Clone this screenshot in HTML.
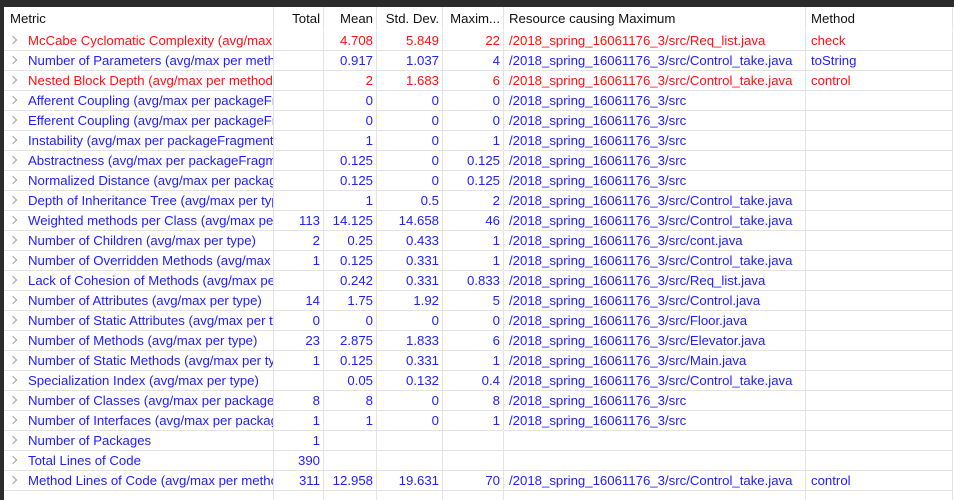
<!DOCTYPE html><html><head><style>
body{margin:0;width:954px;height:500px;overflow:hidden;background:#fff;font-family:"Liberation Sans","Noto Sans CJK SC",sans-serif;font-size:13.2px;position:relative}
.top{position:absolute;left:0;top:0;width:954px;height:7px;background:#2b2b2b}
.lft{position:absolute;left:0;top:0;width:4px;height:500px;background:#2b2b2b}
.r{position:absolute;left:4px;width:949px;height:20px;border-bottom:1px solid #e3e3e3;box-sizing:border-box}
.c{position:absolute;top:0;height:20px;line-height:20px;white-space:nowrap;overflow:hidden;border-right:1px solid #e3e3e3;box-sizing:border-box}
.n{text-align:right;padding-right:3px}
.red{color:#ff1010}.blue{color:#2020ff}.h{color:#111}
.chev{position:absolute;left:6px;top:6px;width:5px;height:5px;border-right:1.6px solid #a0a0a0;border-top:1.6px solid #a0a0a0;transform:rotate(45deg)}
</style></head><body>
<div class="top"></div><div class="lft"></div>
<div id="t"></div>
<script>
const rows=[
["red","McCabe Cyclomatic Complexity (avg/max per method)","","4.708","5.849","22","/2018_spring_16061176_3/src/Req_list.java","check"],
["blue","Number of Parameters (avg/max per method)","","0.917","1.037","4","/2018_spring_16061176_3/src/Control_take.java","toString"],
["red","Nested Block Depth (avg/max per method)","","2","1.683","6","/2018_spring_16061176_3/src/Control_take.java","control"],
["blue","Afferent Coupling (avg/max per packageFragment)","","0","0","0","/2018_spring_16061176_3/src",""],
["blue","Efferent Coupling (avg/max per packageFragment)","","0","0","0","/2018_spring_16061176_3/src",""],
["blue","Instability (avg/max per packageFragment)","","1","0","1","/2018_spring_16061176_3/src",""],
["blue","Abstractness (avg/max per packageFragment)","","0.125","0","0.125","/2018_spring_16061176_3/src",""],
["blue","Normalized Distance (avg/max per packageFragment)","","0.125","0","0.125","/2018_spring_16061176_3/src",""],
["blue","Depth of Inheritance Tree (avg/max per type)","","1","0.5","2","/2018_spring_16061176_3/src/Control_take.java",""],
["blue","Weighted methods per Class (avg/max per type)","113","14.125","14.658","46","/2018_spring_16061176_3/src/Control_take.java",""],
["blue","Number of Children (avg/max per type)","2","0.25","0.433","1","/2018_spring_16061176_3/src/cont.java",""],
["blue","Number of Overridden Methods (avg/max per type)","1","0.125","0.331","1","/2018_spring_16061176_3/src/Control_take.java",""],
["blue","Lack of Cohesion of Methods (avg/max per type)","","0.242","0.331","0.833","/2018_spring_16061176_3/src/Req_list.java",""],
["blue","Number of Attributes (avg/max per type)","14","1.75","1.92","5","/2018_spring_16061176_3/src/Control.java",""],
["blue","Number of Static Attributes (avg/max per type)","0","0","0","0","/2018_spring_16061176_3/src/Floor.java",""],
["blue","Number of Methods (avg/max per type)","23","2.875","1.833","6","/2018_spring_16061176_3/src/Elevator.java",""],
["blue","Number of Static Methods (avg/max per type)","1","0.125","0.331","1","/2018_spring_16061176_3/src/Main.java",""],
["blue","Specialization Index (avg/max per type)","","0.05","0.132","0.4","/2018_spring_16061176_3/src/Control_take.java",""],
["blue","Number of Classes (avg/max per packageFragment)","8","8","0","8","/2018_spring_16061176_3/src",""],
["blue","Number of Interfaces (avg/max per packageFragment)","1","1","0","1","/2018_spring_16061176_3/src",""],
["blue","Number of Packages","1","","","","",""],
["blue","Total Lines of Code","390","","","","",""],
["blue","Method Lines of Code (avg/max per method)","311","12.958","19.631","70","/2018_spring_16061176_3/src/Control_take.java","control"]];
const cols=[[0,270],[270,50],[320,53],[373,66],[439,61],[500,302],[802,147]];
function row(y,cls,vals,chev,noborder,hh){
 let h=`<div class="r ${cls}" style="top:${y}px;${hh?'height:'+hh+'px;':''}${noborder?'border-bottom:none':''}">`;
 if(chev)h+='<div class="chev"></div>';
 vals.forEach((v,i)=>{const[x,w]=cols[i];const num=i>=1&&i<=4;
  h+=`<div class="c ${num?'n':''}" style="left:${x}px;width:${w}px;${hh?'height:'+hh+'px;line-height:'+(hh+1)+'px;':''}${i==0?'padding-left:'+(chev?24:6)+'px;':''}${i>=5?'padding-left:5px;':''}">${v}</div>`});
 return h+'</div>';}
let s=row(7,'h',["Metric","Total","Mean","Std. Dev.","Maxim...","Resource causing Maximum","Method"],false,true,23);
rows.forEach((r,i)=>{s+=row(31+i*20,r[0],r.slice(1),true)});
s+=`<div class="r" style="top:491px;height:9px;border:none"><div class="c" style="left:0;width:270px;height:9px"></div><div class="c" style="left:270px;width:50px;height:9px"></div><div class="c" style="left:320px;width:53px;height:9px"></div><div class="c" style="left:373px;width:66px;height:9px"></div><div class="c" style="left:439px;width:61px;height:9px"></div><div class="c" style="left:500px;width:302px;height:9px"></div><div class="c" style="left:802px;width:147px;height:9px"></div></div>`;
document.getElementById('t').innerHTML=s;
</script>
</body></html>
